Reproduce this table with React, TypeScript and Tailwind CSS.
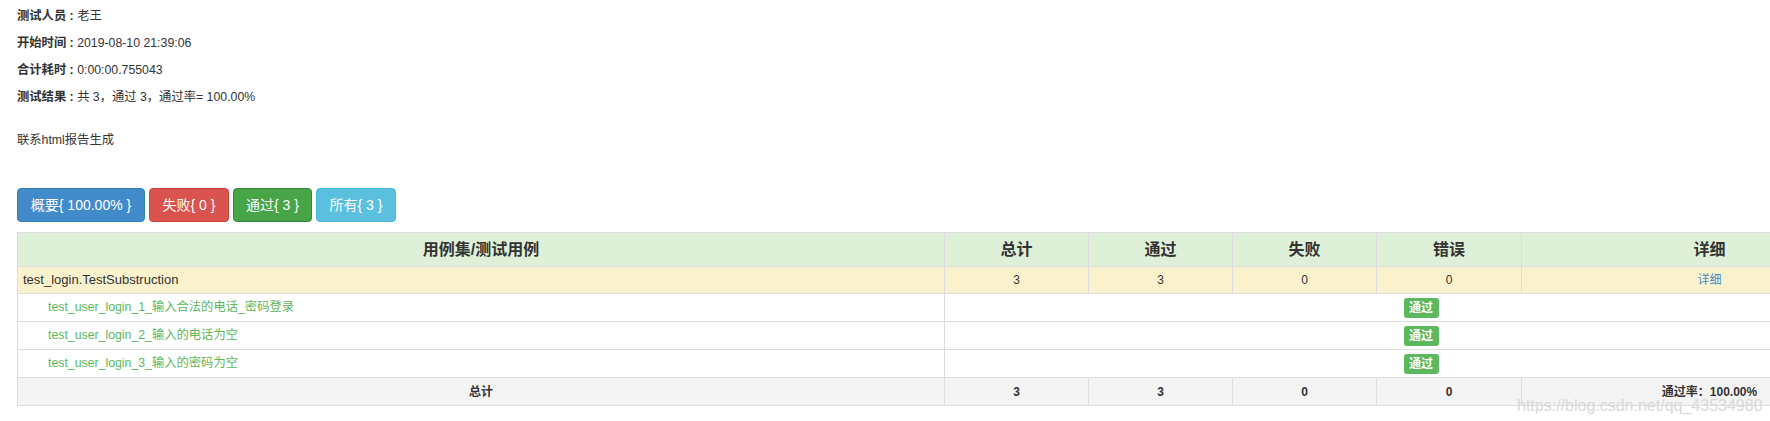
import React from "react";

const font = { fontFamily: '"Liberation Sans", "Noto Sans CJK SC", sans-serif' };

const cases = [
  "test_user_login_1_输入合法的电话_密码登录",
  "test_user_login_2_输入的电话为空",
  "test_user_login_3_输入的密码为空",
];

export default function App() {
  return (
    <div
      className="relative w-full h-[421px] overflow-hidden bg-white text-[#333] pl-[17px] pt-[3px] text-[12px]"
      style={font}
    >
      <div className="leading-[27px] h-[27px] text-[12.3px]">
        <b>测试人员 : </b>老王
      </div>
      <div className="leading-[27px] h-[27px] text-[12.3px]">
        <b>开始时间 : </b>2019-08-10 21:39:06
      </div>
      <div className="leading-[27px] h-[27px] text-[12.3px]">
        <b>合计耗时 : </b>0:00:00.755043
      </div>
      <div className="leading-[27px] h-[27px] text-[12.3px]">
        <b>测试结果 : </b>共 3，通过 3，通过率= 100.00%
      </div>
      <div className="leading-[27px] h-[27px] mt-[16px] text-[12.3px]">联系html报告生成</div>

      <div className="flex gap-[4px] mt-[34px] text-[14px] text-white">
        <button className="w-[128px] h-[34px] rounded-[4px] bg-[#428bca] border border-[#357ebd]">
          概要{"{"} 100.00% {"}"}
        </button>
        <button className="w-[80px] h-[34px] rounded-[4px] bg-[#d9534f] border border-[#d43f3a]">
          失败{"{"} 0 {"}"}
        </button>
        <button className="w-[79px] h-[34px] rounded-[4px] bg-[#47a447] border border-[#398439]">
          通过{"{"} 3 {"}"}
        </button>
        <button className="w-[80px] h-[34px] rounded-[4px] bg-[#5bc0de] border border-[#46b8da]">
          所有{"{"} 3 {"}"}
        </button>
      </div>

      <table className="mt-[10px] w-[1880px] table-fixed border-collapse border border-[#ddd] text-[12px]">
        <colgroup>
          <col className="w-[927px]" />
          <col className="w-[144px]" />
          <col className="w-[144px]" />
          <col className="w-[144px]" />
          <col className="w-[145px]" />
          <col className="w-[376px]" />
        </colgroup>
        <thead>
          <tr className="bg-[#dff0d8] h-[34px] text-[16px] font-bold">
            <td className="border border-[#ddd] text-center">用例集/测试用例</td>
            <td className="border border-[#ddd] text-center">总计</td>
            <td className="border border-[#ddd] text-center">通过</td>
            <td className="border border-[#ddd] text-center">失败</td>
            <td className="border border-[#ddd] text-center">错误</td>
            <td className="border border-[#ddd] text-center">详细</td>
          </tr>
        </thead>
        <tbody>
          <tr className="bg-[#faf2cc] h-[27px]">
            <td className="border border-[#ddd] pl-[5px] text-[13px]">test_login.TestSubstruction</td>
            <td className="border border-[#ddd] text-center">3</td>
            <td className="border border-[#ddd] text-center">3</td>
            <td className="border border-[#ddd] text-center">0</td>
            <td className="border border-[#ddd] text-center">0</td>
            <td className="border border-[#ddd] text-center">
              <span className="text-[#428bca]">详细</span>
            </td>
          </tr>
          {cases.map((c) => (
            <tr key={c} className="h-[28px] bg-white">
              <td className="border border-[#ddd] pl-[30px] text-[#5cb85c] text-[12.3px]">{c}</td>
              <td colSpan={5} className="border border-[#ddd] text-center">
                <span className="inline-flex items-center justify-center w-[35px] h-[20px] rounded-[3px] bg-[#5cb85c] text-white font-bold text-[12px] align-middle">
                  通过
                </span>
              </td>
            </tr>
          ))}
          <tr className="bg-[#f4f4f4] h-[28px] font-bold">
            <td className="border border-[#ddd] text-center">总计</td>
            <td className="border border-[#ddd] text-center">3</td>
            <td className="border border-[#ddd] text-center">3</td>
            <td className="border border-[#ddd] text-center">0</td>
            <td className="border border-[#ddd] text-center">0</td>
            <td className="border border-[#ddd] text-center">通过率：100.00%</td>
          </tr>
        </tbody>
      </table>

      <div className="absolute left-[1517px] top-[394px] text-[16px] text-[#d6d6d6] opacity-90 pointer-events-none whitespace-nowrap">
        https://blog.csdn.net/qq_43534980
      </div>
    </div>
  );
}
